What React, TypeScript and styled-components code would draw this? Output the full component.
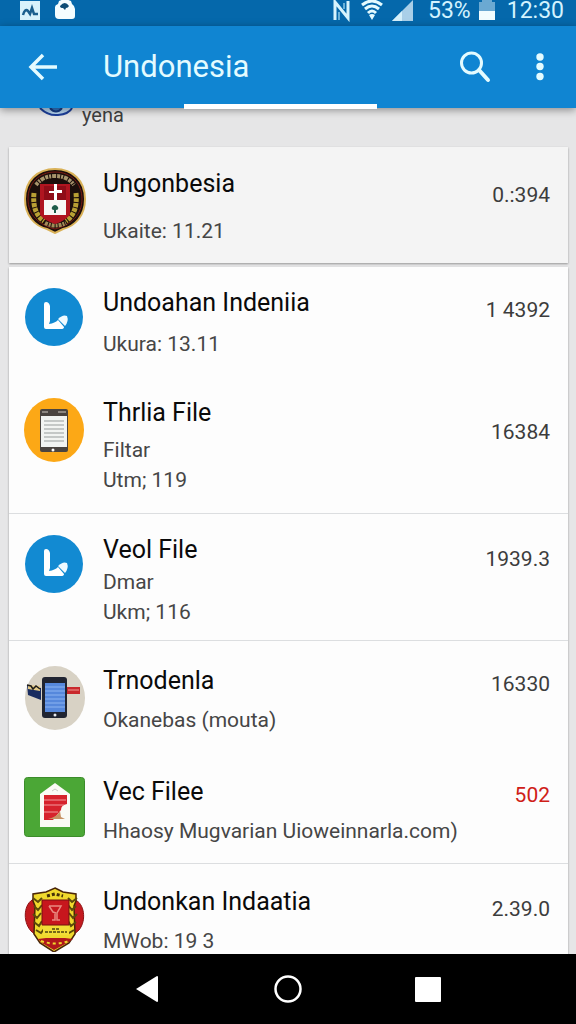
import React from "react";
import styled, { createGlobalStyle } from "styled-components";

const GlobalStyle = createGlobalStyle`
  * { box-sizing: border-box; }
  body { margin: 0; background: #e6e6e7; font-family: Roboto, "Noto Sans", sans-serif; }
  button { border: 0; padding: 0; background: none; color: inherit; font: inherit; cursor: pointer; }
  svg { display: block; flex: none; }
`;

const Screen = styled.div`
  display: flex;
  flex-direction: column;
  height: 100vh;
  overflow: hidden;
`;

const StatusBar = styled.div`
  display: flex;
  align-items: center;
  justify-content: space-between;
  flex: none;
  height: 26px;
  padding: 0 12px 4px 20px;
  background: #0568ab;
  color: #d3f3ff;
  font-size: 23px;
  line-height: 22px;
`;

const StatusGroup = styled.div<{ $gap: number }>`
  display: flex;
  align-items: center;
  gap: ${(p) => p.$gap}px;
`;

const Battery = styled.span`
  margin-left: 6px;
`;

const Clock = styled.time`
  margin-left: 4px;
`;

const AppBar = styled.header`
  position: relative;
  z-index: 1;
  display: flex;
  align-items: center;
  flex: none;
  height: 82px;
  padding: 0 18px 0 24px;
  background: #1085d2;
  color: #e4fbff;
  box-shadow: 0 2px 8px rgba(0, 0, 0, 0.4);
`;

const BarTitle = styled.h1`
  flex: 1;
  margin: 0 0 0 43px;
  font-size: 31px;
  font-weight: 400;
  line-height: 36px;
`;

const BarButton = styled.button`
  display: grid;
  place-items: center;
  width: 36px;
  height: 40px;
`;

const BarActions = styled.div`
  display: flex;
  gap: 29px;
`;

const TabIndicator = styled.div`
  position: absolute;
  bottom: -1px;
  left: 32%;
  width: 33.5%;
  height: 5px;
  background: #fff;
`;

const Content = styled.main`
  flex: 1;
  min-height: 0;
  overflow: hidden;
  padding: 0 8px 0 9px;
`;

const Peek = styled.div`
  display: flex;
  gap: 8px;
  height: 39px;
  padding-left: 30px;
  color: #3f3f3f;
  font-size: 20px;
  line-height: 14px;
`;

const Card = styled.ul<{ $muted?: boolean }>`
  list-style: none;
  margin: 0 0 4px;
  padding: 0;
  background: ${(p) => (p.$muted ? "#f4f4f4" : "#fdfdfd")};
  box-shadow: 0 1px 2px rgba(0, 0, 0, 0.35);
`;

const Row = styled.li<{ $top: number; $bottom: number; $divided?: boolean }>`
  display: flex;
  align-items: flex-start;
  padding: ${(p) => p.$top}px 18px ${(p) => p.$bottom}px 15px;
  border-bottom: ${(p) => (p.$divided ? "1px solid #dcdee0" : "0")};
`;

const RowText = styled.div`
  flex: 1;
  min-width: 0;
  margin-left: 17px;
`;

const RowTitle = styled.h2<{ $gap: number }>`
  margin: 0 0 ${(p) => p.$gap}px;
  color: #0a0a0a;
  font-size: 25px;
  font-weight: 400;
  line-height: 32px;
  white-space: nowrap;
`;

const RowLine = styled.p`
  margin: 0;
  color: #464646;
  font-size: 21px;
  line-height: 30px;
  white-space: nowrap;
`;

const RowValue = styled.span<{ $drop: number; $alert?: boolean }>`
  margin-top: ${(p) => p.$drop}px;
  color: ${(p) => (p.$alert ? "#cf2018" : "#3c3c3c")};
  font-size: 21px;
  line-height: 30px;
`;

const NavBar = styled.nav`
  display: flex;
  align-items: center;
  justify-content: center;
  gap: 112px;
  flex: none;
  height: 70px;
  background: #000;
  color: #fff;
`;

const NavButton = styled.button`
  width: 28px;
  height: 28px;
`;

const SealIcon = () => (
  <svg width="62" height="66" viewBox="0 0 62 66">
    <path d="M31 1C49 1 61 13 61 31c0 17-10 27-22 30l-8 4-8-4C11 58 1 48 1 31 1 13 13 1 31 1z" fill="#1b0e0b" stroke="#d9b157" strokeWidth="2" />
    <path d="M31 4c16 0 27 11 27 27S47 57 31 61C15 57 4 47 4 31S15 4 31 4z" fill="none" stroke="#7d1b14" strokeWidth="1" />
    <path d="M12 17C17 10 24 8 31 8s14 2 19 9" fill="none" stroke="#a8946c" strokeWidth="4" strokeDasharray="3 1 2 1 4 1" />
    <path d="M21 55q10 5 21 0" fill="none" stroke="#a38c58" strokeWidth="4" strokeDasharray="3 1 2 1" />
    <path d="M10 25q-2 20 10 28M52 25q2 20-10 28" fill="none" stroke="#b8a034" strokeWidth="5" strokeDasharray="4 1" />
    <path d="M16 16h30v31q-7 7-15 9-10-3-15-9z" fill="#b01520" />
    <path d="M20 18h22v14H20z" fill="#8f0d18" />
    <path d="M20 32h22v15H20z" fill="#f7f7f5" />
    <path d="M30 16h3v6h5v3h-5v7h-3v-7h-5v-2h5z" fill="#fff" />
    <path d="M28 39q3-4 6 0 1 3-2 3v3h-2v-3q-3 0-2-3z" fill="#1d5b48" />
  </svg>
);

const BlueIcon = () => (
  <svg width="62" height="60" viewBox="0 0 62 60">
    <circle cx="30" cy="30" r="29" fill="#128ad2" />
    <path d="M20 17q0-2 2-2 3 0 4 4v15l-1 3q6-1 9-4l6 7q0 2-3 2H22q-2 0-2-2z" fill="#fff" />
    <path d="M34 32q5-5 9-3 2 5-2 10z" fill="#effaff" />
  </svg>
);

const TabletIcon = () => (
  <svg width="62" height="66" viewBox="0 0 62 66">
    <ellipse cx="30" cy="33" rx="30" ry="32" fill="#fca816" />
    <rect x="16" y="12" width="28" height="43" rx="2" fill="#4a4440" />
    <rect x="17" y="19" width="26" height="31" fill="#f2f4f2" />
    <path d="M20 24h20M20 28h20M20 32h20M20 36h20M20 40h20M20 44h20" stroke="#979c9b" strokeWidth="1" />
    <path d="M18 15h6M34 15h8" stroke="#8d8781" strokeWidth="2" />
    <circle cx="29" cy="53" r="1.500" fill="#fff" />
  </svg>
);

const PhoneIcon = () => (
  <svg width="62" height="66" viewBox="0 0 62 66">
    <ellipse cx="31" cy="33" rx="30" ry="32" fill="#d8d2c5" />
    <path d="M3 20l14 3v12L4 30z" fill="#192c60" />
    <path d="M4 20l12 1v5L4 24z" fill="#e3c987" />
    <path d="M3 20l4 1 2 3 3-3 4 3" fill="none" stroke="#1b1b1b" strokeWidth="1.500" />
    <path d="M43 22h13v7H43z" fill="#c9282c" />
    <path d="M44 25h11" stroke="#ee9992" strokeWidth="1" />
    <rect x="18" y="12" width="25" height="41" rx="3" fill="#202431" />
    <rect x="21" y="18" width="20" height="29" fill="#5688dc" />
    <path d="M21 22h20M21 26h20M21 30h20M21 34h20M21 38h20M21 42h20" stroke="#8cb4f1" strokeWidth="1" />
    <circle cx="31" cy="50" r="1.500" fill="#e6e9ee" />
  </svg>
);

const HouseIcon = () => (
  <svg width="62" height="62" viewBox="0 0 62 62">
    <rect x="0.500" y="1.500" width="60" height="59" rx="3" fill="#4ba736" stroke="#3c8c2b" />
    <path d="M16 18L31 7l15 11v33H16z" fill="#fafaf5" />
    <path d="M20 19h23v9q-6 1-6 6l-4 5-4 5h-9z" fill="#d6222c" />
    <path d="M20 24h22M20 29h20M20 36h14" stroke="#f2999b" strokeWidth="1" />
    <path d="M24 43q9-2 12-8l1 6 4 2z" fill="#c79264" />
    <path d="M28 15l3-2 3 2" fill="none" stroke="#c9cac3" />
  </svg>
);

const CrestIcon = () => (
  <svg width="62" height="66" viewBox="0 0 62 66">
    <path d="M10 13C0 17-2 35 7 45l7 6h33l8-7C63 34 60 17 51 14z" fill="#c31a1f" stroke="#8e1013" />
    <path d="M31 2l8 4 13 2v7l-2 5 1 28-6 9-15 9-14-9-6-9 1-28-2-5V8l13-2z" fill="#f0d92d" stroke="#4a2508" strokeWidth="1.500" />
    <path d="M9 12l5 4 4-4M10 20l4 4 4-5M9 28l4 4 4-5M10 36l5 4 3-5M12 44l5 3 3-4M53 12l-5 4-4-4M52 20l-4 4-4-5M53 28l-4 4-4-5M52 36l-5 4-3-5M50 44l-5 3-3-4" fill="none" stroke="#5c4a0b" strokeWidth="2" />
    <path d="M18 14h27v25H18z" fill="#c7161d" stroke="#751012" />
    <path d="M25 20h12l-4 7v7h3M32 27l-3-1-4-6M31 27v7h-3" fill="none" stroke="#e98a81" strokeWidth="1.500" />
    <path d="M19 40h26v9H19z" fill="#f2dd37" />
    <path d="M21 46h22M28 43h7" stroke="#4d430e" strokeWidth="1.500" strokeDasharray="3 1" />
    <path d="M14 53l8-1h19l8 1-6 4-13 7-12-7z" fill="#b0171b" />
    <path d="M23 10l8-2 8 2" fill="none" stroke="#443009" strokeWidth="3" strokeDasharray="3 2" />
    <path d="M17 55q14 5 28 0" fill="none" stroke="#f0d92d" strokeWidth="2" strokeDasharray="3 3" />
  </svg>
);

type Item = {
  icon: React.ComponentType;
  title: string;
  lines: string[];
  value: string;
  alert?: boolean;
  divided?: boolean;
  top: number;
  bottom: number;
  gap: number;
  drop: number;
};

const featured: Item[] = [
  { icon: SealIcon, title: "Ungonbesia", lines: ["Ukaite: 11.21"], value: "0.:394", top: 21, bottom: 17, gap: 16, drop: 12 },
];

const files: Item[] = [
  { icon: BlueIcon, title: "Undoahan Indeniia", lines: ["Ukura: 13.11"], value: "1 4392", top: 20, bottom: 18, gap: 10, drop: 8 },
  { icon: TabletIcon, title: "Thrlia File", lines: ["Filtar", "Utm; 119"], value: "16384", divided: true, top: 20, bottom: 18, gap: 6, drop: 20 },
  { icon: BlueIcon, title: "Veol File", lines: ["Dmar", "Ukm; 116"], value: "1939.3", divided: true, top: 20, bottom: 13, gap: 1, drop: 10 },
  { icon: PhoneIcon, title: "Trnodenla", lines: ["Okanebas (mouta)"], value: "16330", top: 24, bottom: 21, gap: 8, drop: 4 },
  { icon: HouseIcon, title: "Vec Filee", lines: ["Hhaosy Mugvarian Uioweinnarla.com)"], value: "502", alert: true, divided: true, top: 20, bottom: 17, gap: 8, drop: 4 },
  { icon: CrestIcon, title: "Undonkan Indaatia", lines: ["MWob: 19 3"], value: "2.39.0", top: 22, bottom: 16, gap: 8, drop: 8 },
];

function FileRow({ item }: { item: Item }) {
  const Icon = item.icon;
  return (
    <Row $top={item.top} $bottom={item.bottom} $divided={item.divided}>
      <Icon />
      <RowText>
        <RowTitle $gap={item.gap}>{item.title}</RowTitle>
        {item.lines.map((line) => (
          <RowLine key={line}>{line}</RowLine>
        ))}
      </RowText>
      <RowValue $drop={item.drop} $alert={item.alert}>{item.value}</RowValue>
    </Row>
  );
}

export default function App() {
  return (
    <Screen>
      <GlobalStyle />
      <StatusBar>
        <StatusGroup $gap={15}>
          <svg width="20" height="22" viewBox="0 0 20 22">
            <path d="M0 1h20v19H0z" fill="#d8f2fb" />
            <path d="M3 15q2-7 5-4l2 3 2-6 2 6h4" fill="none" stroke="#1b5f8d" strokeWidth="2.500" />
          </svg>
          <svg width="20" height="22" viewBox="0 0 20 22">
            <path d="M4 1q6-3 12 0l1 3q3 2 3 5v7q0 3-3 3H4q-4 0-4-4V7q0-2 3-3z" fill="#f4fdff" />
            <path d="M5 6q5-6 9 0-1 2-3 2l-1 2-2-2q-3 0-3-2z" fill="#0d4d77" />
          </svg>
        </StatusGroup>
        <StatusGroup $gap={8}>
          <svg width="20" height="22" viewBox="0 0 20 22">
            <path d="M3 20V2l13 16V1" fill="none" stroke="#d6f3fd" strokeWidth="3" />
            <path d="M7 20V12M12 3v6" stroke="#8cc9e8" strokeWidth="1.500" />
          </svg>
          <svg width="24" height="22" viewBox="0 0 24 22">
            <path d="M2 5q10-8 20 0M5 9q7-6 14 0M8 13q4-4 8 0" fill="none" stroke="#e4fbff" strokeWidth="3" />
            <path d="M9 15q3-2 6 0l-3 5z" fill="#e4fbff" />
          </svg>
          <svg width="22" height="22" viewBox="0 0 22 22">
            <path d="M0 21L21 0v21z" fill="#a9cfe8" />
            <path d="M0 21L10 11v10z" fill="#d5f0fb" />
          </svg>
          <Battery>53%</Battery>
          <svg width="16" height="22" viewBox="0 0 16 22">
            <path d="M3 0h10v2h3v10H0V2h3z" fill="#6ba9d2" />
            <path d="M0 11h16v9H0z" fill="#f2fdff" />
          </svg>
          <Clock>12:30</Clock>
        </StatusGroup>
      </StatusBar>

      <AppBar>
        <BarButton aria-label="Back">
          <svg width="30" height="28" viewBox="0 0 30 28">
            <path d="M16 2L4 14l12 12M4 14h26" fill="none" stroke="currentColor" strokeWidth="3.500" />
          </svg>
        </BarButton>
        <BarTitle>Undonesia</BarTitle>
        <BarActions>
          <BarButton aria-label="Search">
            <svg width="32" height="32" viewBox="0 0 32 32">
              <circle cx="12.500" cy="12" r="10" fill="none" stroke="currentColor" strokeWidth="3" />
              <path d="M20 19l9 10" stroke="currentColor" strokeWidth="4" strokeLinecap="round" />
            </svg>
          </BarButton>
          <BarButton aria-label="More options">
            <svg width="8" height="30" viewBox="0 0 8 30">
              <circle cx="4" cy="5" r="3.700" fill="currentColor" />
              <circle cx="4" cy="14.500" r="3.700" fill="currentColor" />
              <circle cx="4" cy="24.500" r="3.700" fill="currentColor" />
            </svg>
          </BarButton>
        </BarActions>
        <TabIndicator />
      </AppBar>

      <Content>
        <Peek>
          <svg width="35" height="9" viewBox="0 0 35 9">
            <path d="M1 0q8 8 18 7 11-1 14-7z" fill="#b9d8f3" />
            <path d="M1 0q8 8 18 7 11-1 14-7" fill="none" stroke="#1d3f9b" strokeWidth="2" />
            <path d="M11 0q6 7 12 0" fill="#3277c5" stroke="#173c87" strokeWidth="2" />
          </svg>
          <span>yena</span>
        </Peek>
        <Card $muted>
          {featured.map((item) => (
            <FileRow key={item.title} item={item} />
          ))}
        </Card>
        <Card>
          {files.map((item) => (
            <FileRow key={item.title} item={item} />
          ))}
        </Card>
      </Content>

      <NavBar>
        <NavButton aria-label="Back">
          <svg width="28" height="28" viewBox="0 0 28 28">
            <path d="M2 14L23 1q1 0 1 1v24q0 1-1 1z" fill="currentColor" />
          </svg>
        </NavButton>
        <NavButton aria-label="Home">
          <svg width="28" height="28" viewBox="0 0 28 28">
            <circle cx="14" cy="14" r="12.500" fill="none" stroke="currentColor" strokeWidth="2.500" />
          </svg>
        </NavButton>
        <NavButton aria-label="Recent apps">
          <svg width="28" height="28" viewBox="0 0 28 28">
            <rect x="1" y="2" width="26" height="25" rx="1" fill="currentColor" />
          </svg>
        </NavButton>
      </NavBar>
    </Screen>
  );
}
